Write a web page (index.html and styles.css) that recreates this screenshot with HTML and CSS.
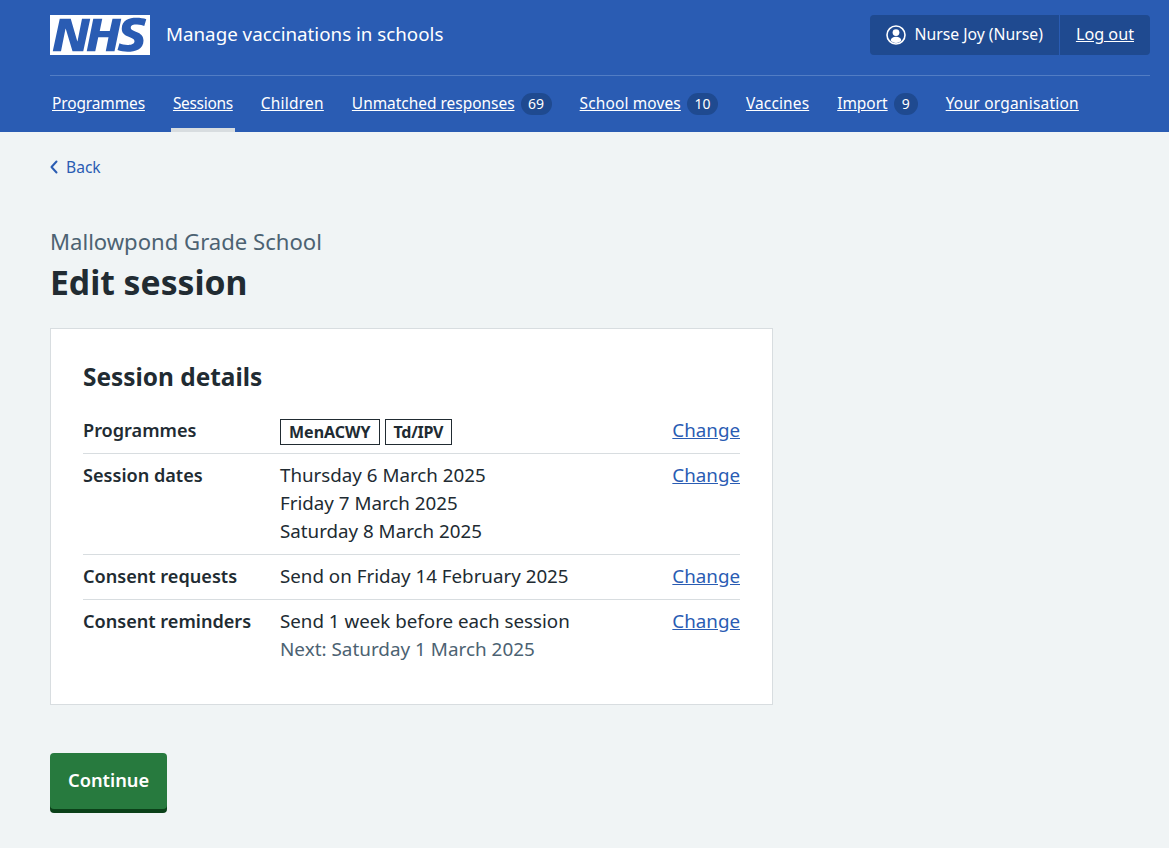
FILE: index.html
```html
<!DOCTYPE html>
<html lang="en">

<head>
    <meta charset="UTF-8">
    <meta name="viewport" content="width=device-width, initial-scale=1.0">
    <title>Edit session</title>

    <link rel="stylesheet" href="styles.css">
</head>

<body>
    <header class="header">
        <div class="header-top">
            <a class="brand" href="#">
                <svg class="logo" viewBox="0 0 40 16" width="100" height="40" aria-label="NHS">
                    <path fill="#fff" d="M0 0h40v16H0z"></path>
                    <path fill="#2a5cb3" d="M3.9 1.5h4.4l2.6 9h.1l1.8-9h3.3l-2.8 13H9l-2.7-9h-.1l-1.8 9H1.1M17.3 1.5h3.6l-1 4.9h4L25 1.5h3.5l-2.7 13h-3.5l1.1-5.6h-4.1l-1.2 5.6h-3.4M37.7 4.4c-.7-.3-1.6-.6-2.9-.6-1.4 0-2.5.2-2.5 1.3 0 1.8 5.1 1.2 5.1 5.1 0 3.6-3.3 4.5-6.4 4.5-1.3 0-2.9-.3-4-.7l.8-2.7c.7.4 2.1.7 3.2.7s2.8-.2 2.8-1.5c0-2.1-5.1-1.3-5.1-5 0-3.4 2.9-4.4 5.8-4.4 1.6 0 3.1.2 4 .6"></path>
                </svg>
                <span class="service-name">Manage vaccinations in schools</span>
            </a>
            <div class="account">
                <div class="account-item">
                    <svg class="account-icon" viewBox="0 0 20 20" width="20" height="20" aria-hidden="true">
                        <circle cx="10" cy="10" r="9" fill="none" stroke="#fff" stroke-width="1.6"></circle>
                        <circle cx="10" cy="7.6" r="3.4" fill="#fff"></circle>
                        <path fill="#fff" d="M4.600 15.600c.5-2.600 2.400-3.800 5.400-3.800s4.900 1.200 5.400 3.800C14 17 12.200 18 10 18s-4-1-5.400-2.400z"></path>
                    </svg>
                    Nurse Joy (Nurse)
                </div>
                <div class="account-item logout"><a href="#">Log out</a></div>
            </div>
        </div>
        <nav class="nav">
            <a class="nav-item" href="#"><span class="nav-text snug">Programmes</span></a>
            <a class="nav-item active" href="#"><span class="nav-text tight">Sessions</span></a>
            <a class="nav-item" href="#"><span class="nav-text loose">Children</span></a>
            <a class="nav-item" href="#"><span class="nav-text">Unmatched responses</span><span class="count">69</span></a>
            <a class="nav-item" href="#"><span class="nav-text wide">School moves</span><span class="count">10</span></a>
            <a class="nav-item" href="#"><span class="nav-text wide">Vaccines</span></a>
            <a class="nav-item" href="#"><span class="nav-text">Import</span><span class="count">9</span></a>
            <a class="nav-item" href="#"><span class="nav-text loose">Your organisation</span></a>
        </nav>
    </header>

    <main class="page">
        <a class="back-link" href="#">
            <svg viewBox="0 0 8 14" width="8" height="14" aria-hidden="true">
                <path d="M6.500 1.500 1.500 7l5 5.500" fill="none" stroke="#2a5cb3" stroke-width="2" stroke-linecap="round" stroke-linejoin="round"></path>
            </svg>
            <span>Back</span>
        </a>

        <p class="caption">Mallowpond Grade School</p>
        <h1>Edit session</h1>

        <!-- Session details card -->
        <section class="card">
            <h2>Session details</h2>
            <dl class="summary">
                <div class="summary-row">
                    <dt>Programmes</dt>
                    <dd class="tags"><span class="tag">MenACWY</span><span class="tag tight">Td/IPV</span></dd>
                    <dd class="action"><a href="#">Change</a></dd>
                </div>
                <div class="summary-row">
                    <dt>Session dates</dt>
                    <dd>Thursday 6 March 2025<br>Friday 7 March 2025<br>Saturday 8 March 2025</dd>
                    <dd class="action"><a href="#">Change</a></dd>
                </div>
                <div class="summary-row">
                    <dt>Consent requests</dt>
                    <dd>Send on Friday 14 February 2025</dd>
                    <dd class="action"><a href="#">Change</a></dd>
                </div>
                <div class="summary-row">
                    <dt>Consent reminders</dt>
                    <dd>Send 1 week before each session<br><span class="secondary">Next: Saturday 1 March 2025</span></dd>
                    <dd class="action"><a href="#">Change</a></dd>
                </div>
            </dl>
        </section>

        <button class="button" type="button">Continue</button>
    </main>
</body>

</html>
```

FILE: styles.css
```css
body {
    font-family: "Noto Sans", Arial, sans-serif;
    margin: 0;
    padding: 0;
    background-color: #f0f4f5;
    color: #212b32;
    font-size: 18.75px;
    line-height: 28px;
}

a {
    color: #2a5cb3;
}

.header {
    background-color: #2a5cb3;
    color: #fff;
    padding: 0 19px 0 50px;
}

.header a {
    color: #fff;
}

.header-top {
    display: flex;
    justify-content: space-between;
    align-items: flex-start;
    padding: 15px 0 20px;
    border-bottom: 1px solid #527dc4;
}

.brand {
    display: flex;
    align-items: center;
    gap: 16px;
    text-decoration: none;
}

.logo {
    display: block;
}

.service-name {
    position: relative;
    top: -1px;
}

.account {
    display: flex;
    background-color: #1f4a90;
    border-radius: 4px;
    font-size: 15.75px;
    height: 40px;
}

.account-item {
    display: flex;
    align-items: center;
    gap: 8px;
    padding: 0 16px 2px;
}

.account-item:first-child .account-icon {
    margin-top: 2px;
}

.account-item + .account-item {
    border-left: 1px solid #2a5cb3;
}

.logout {
    font-size: 16.2px;
}

.nav {
    display: flex;
    gap: 24px;
    height: 56px;
}

.nav-item {
    display: flex;
    align-items: center;
    gap: 6px;
    padding: 2px 2px 0;
    height: 56px;
    box-sizing: border-box;
    border-bottom: 4px solid transparent;
    font-size: 15.45px;
    text-decoration: none;
}

.nav-item.active {
    border-bottom-color: #d8dde0;
}

.nav-text {
    text-decoration: underline;
}

.snug {
    letter-spacing: -0.1px;
}

.tight {
    letter-spacing: -0.3px;
}

.wide {
    letter-spacing: 0.15px;
}

.loose {
    letter-spacing: 0.25px;
}

.count {
    background-color: #1f4a90;
    border-radius: 12px;
    min-width: 24px;
    margin-top: 2px;
    padding: 0 7.5px;
    height: 22px;
    line-height: 22px;
    font-size: 14px;
    text-align: center;
    box-sizing: border-box;
}

.page {
    padding: 0 50px;
}

.back-link {
    display: inline-flex;
    align-items: center;
    gap: 8px;
    margin-top: 21px;
    font-size: 15.6px;
    line-height: 28px;
    text-decoration: none;
}

.back-link svg {
    display: block;
}

.caption {
    margin: 44px 0 0;
    font-size: 22.1px;
    line-height: 32px;
    color: #4c6272;
}

h1 {
    margin: 5px 0 26px;
    font-size: 33.7px;
    line-height: 40px;
    font-weight: 700;
}

.card {
    width: 723px;
    box-sizing: border-box;
    padding: 32px;
    background: #fff;
    border: 1px solid #d8dde0;
}

h2 {
    margin: 0 0 16px;
    font-size: 24.4px;
    line-height: 32px;
    font-weight: 700;
}

.summary {
    margin: 0;
}

.summary-row {
    display: flex;
    padding: 7px 0 9px;
    border-bottom: 1px solid #d8dde0;
}

.summary-row:last-child {
    border-bottom: none;
}

dt {
    width: 197px;
    font-size: 18.1px;
    font-weight: 600;
    flex-shrink: 0;
}

dd {
    margin: 0;
    flex: 1;
}

dd.action {
    flex: none;
    text-align: right;
}

.tags {
    display: flex;
    align-items: center;
    gap: 5px;
}

.tag {
    border: 1px solid #212b32;
    margin: 2px 0 -2px;
    padding: 0 8px;
    font-size: 16px;
    font-weight: 700;
    line-height: 24px;
}

.secondary {
    color: #4c6272;
    font-size: 18.9px;
}

.button {
    display: block;
    margin: 48px 0 35px;
    padding: 0 18px 4px;
    height: 56px;
    background-color: #277a3e;
    color: #fff;
    border: none;
    border-radius: 4px;
    box-shadow: 0 4px 0 #0b4119;
    font-family: inherit;
    font-size: 18.3px;
    font-weight: 600;
    cursor: pointer;
}
```
